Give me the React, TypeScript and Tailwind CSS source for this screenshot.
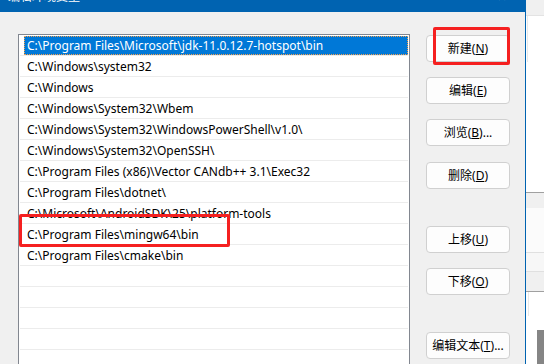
import React from 'react';

const paths = [
  'C:\\Program Files\\Microsoft\\jdk-11.0.12.7-hotspot\\bin',
  'C:\\Windows\\system32',
  'C:\\Windows',
  'C:\\Windows\\System32\\Wbem',
  'C:\\Windows\\System32\\WindowsPowerShell\\v1.0\\',
  'C:\\Windows\\System32\\OpenSSH\\',
  'C:\\Program Files (x86)\\Vector CANdb++ 3.1\\Exec32',
  'C:\\Program Files\\dotnet\\',
  'C:\\Microsoft\\AndroidSDK\\25\\platform-tools',
  'C:\\Program Files\\mingw64\\bin',
  'C:\\Program Files\\cmake\\bin',
  '', '', '', '', '', '',
];

const buttons = [
  { label: '新建', key: 'N', gap: 'mt-0' },
  { label: '编辑', key: 'E', gap: 'mt-[15px]' },
  { label: '浏览', key: 'B', gap: 'mt-[15px]', dots: true },
  { label: '删除', key: 'D', gap: 'mt-[16px]' },
  { label: '上移', key: 'U', gap: 'mt-[37px]' },
  { label: '下移', key: 'O', gap: 'mt-[15px]' },
  { label: '编辑文本', key: 'T', gap: 'mt-[37px]', dots: true },
];

const font = "font-['Noto_Sans','Noto_Sans_CJK_SC',sans-serif]";

export default function App() {
  return (
    <div className={`relative w-[544px] h-[364px] overflow-hidden flex bg-white ${font}`}>
      {/* Dialog */}
      <div className="w-[526px] h-full flex flex-col border-r border-[#0063b1]">
        <div className="h-[12px] bg-[#0063b1] overflow-hidden flex justify-between px-[8px] text-white text-[12px] leading-[12px]">
          <span className="-mt-[9px]">编辑环境变量</span>
          <span className="-mt-[9px] mr-[10px]">✕</span>
        </div>

        <div className="flex-1 bg-[#f0f0f0] flex pt-[22px] pl-[18px] overflow-hidden">
          {/* List */}
          <div className="w-[392px] h-[360px] shrink-0 border border-[#828790] bg-white">
            {paths.map((p, i) => (
              <div key={i} className="h-[21px] pt-[1px] mx-[1px] border-b border-[#ececec]">
                <div
                  className={
                    i === 0
                      ? 'ml-[4px] h-[19px] bg-[#0078d7] text-white border border-dotted border-[#f0a050] flex items-center pl-[2px]'
                      : 'ml-[4px] h-[19px] text-black flex items-center pl-[3px]'
                  }
                >
                  <span className="text-[12px] leading-[19px] whitespace-nowrap">{p}</span>
                </div>
              </div>
            ))}
          </div>

          {/* Buttons */}
          <div className="ml-[16px] pt-[1px] flex flex-col">
            {buttons.map((b) => (
              <div
                key={b.key}
                className={`${b.gap} w-[84px] h-[27px] rounded-[4px] border border-[#d0d0d0] bg-[#fdfdfd] flex items-center justify-center text-[12px] text-black`}
              >
                <span>
                  {b.label}(<span className="underline underline-offset-[1px]">{b.key}</span>){b.dots ? '...' : ''}
                </span>
              </div>
            ))}
          </div>
        </div>
      </div>

      {/* Background window behind */}
      <div className="flex-1 h-full flex flex-col">
        <div className="h-[16px] bg-[#f0f0f0] border-b border-[#e3e3e3]" />
        <div className="h-[176px] bg-white pl-[1px]">
          <div className="w-[1px] h-[46px] bg-[#e8e8e8]" />
        </div>
        <div className="h-[16px] bg-[#f0f0f0] border-t border-[#a0a0a0]" />
        <div className="h-[45px] bg-[#fbfbfb] border-b border-[#e0e0e0]" />
        <div className="h-[19px] bg-[#f7f7f7] border-b border-[#e0e0e0]" />
        <div className="h-[20px] bg-[#f0f0f0] border-b border-[#a0a0a0]" />
        <div className="flex-1 bg-white flex pl-[2px]">
          <div className="w-[1px] h-[24px] bg-[#e8e8e8]" />
          <div className="ml-[8px] mt-[38px] w-[2px] flex-1 bg-[#858585]" />
        </div>
      </div>

      {/* Red annotation boxes */}
      <div className="absolute left-[433px] top-[27px] w-[77px] h-[38px] border-[3px] border-[#f52020] rounded-[2px]" />
      <div className="absolute left-[19px] top-[214px] w-[211px] h-[33px] border-[3px] border-[#f52020] rounded-[2px]" />
    </div>
  );
}
